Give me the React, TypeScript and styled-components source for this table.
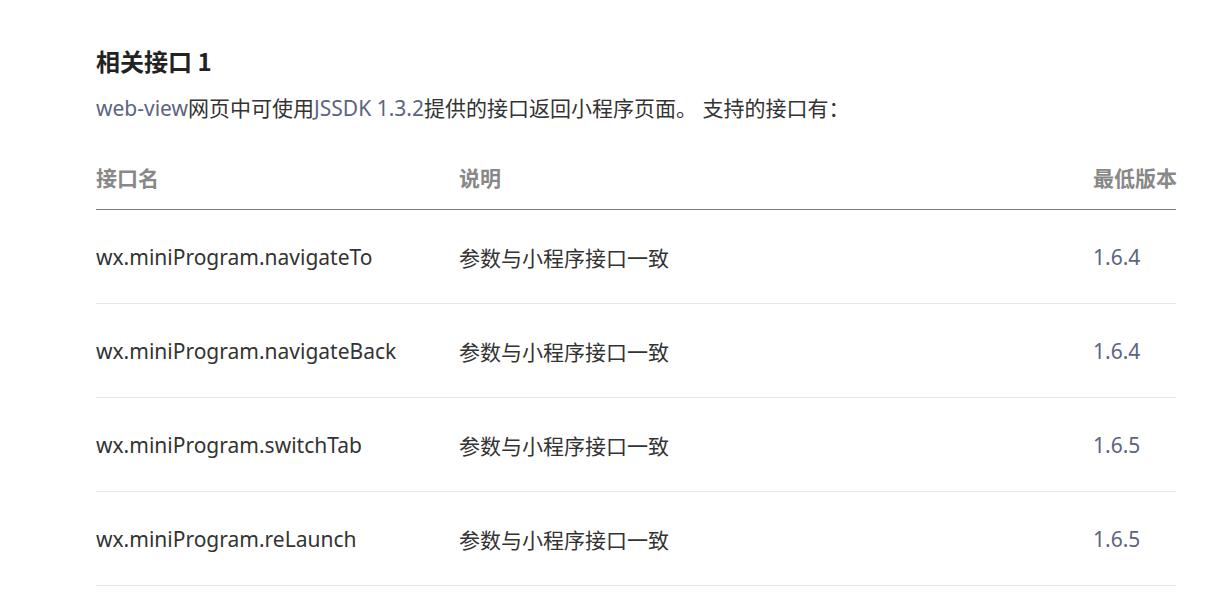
import React from "react";
import styled, { createGlobalStyle } from "styled-components";

const Global = createGlobalStyle`
  html, body { margin: 0; padding: 0; background: #fff; }
  body { font-family: "Noto Sans", "Noto Sans CJK SC", sans-serif; color: #333; }
`;

const Page = styled.div`
  padding: 45px 38px 0 96px;
  width: 1080px;
`;

const Title = styled.h2`
  margin: 0;
  font-size: 24px;
  line-height: 32px;
  font-weight: 700;
  color: #222;
  font-family: "Noto Sans CJK SC", sans-serif;
`;

const Para = styled.p`
  margin: 15px 0 0;
  font-size: 21px;
  line-height: 32px;
  color: #333;
  font-family: "Noto Sans", "Noto Sans CJK SC", sans-serif;
`;

const Link = styled.span`
  color: #5b6580;
`;

const Table = styled.table`
  margin-top: 22px;
  width: 1080px;
  border-collapse: collapse;
  table-layout: fixed;
`;

const Th = styled.th<{ $w: number }>`
  width: ${(p) => p.$w}px;
  text-align: left;
  font-weight: 700;
  font-size: 21px;
  color: #888;
  padding: 0 0 1px;
  height: 62px;
  border-bottom: 1px solid #7a7a7a;
  font-family: "Noto Sans CJK SC", sans-serif;
  white-space: nowrap;
`;

const Td = styled.td<{ $muted?: boolean }>`
  padding: 0;
  height: 93px;
  font-size: 21px;
  color: ${(p) => (p.$muted ? "#5b6580" : "#333")};
  border-bottom: 1px solid #e8e8e8;
  white-space: nowrap;
  font-family: "Noto Sans", "Noto Sans CJK SC", sans-serif;
`;

const rows = [
  ["wx.miniProgram.navigateTo", "1.6.4"],
  ["wx.miniProgram.navigateBack", "1.6.4"],
  ["wx.miniProgram.switchTab", "1.6.5"],
  ["wx.miniProgram.reLaunch", "1.6.5"],
];

export default function App() {
  return (
    <>
      <Global />
      <Page>
        <Title>相关接口 1</Title>
        <Para>
          <Link>web-view</Link>网页中可使用<Link>JSSDK 1.3.2</Link>提供的接口返回小程序页面。 支持的接口有：
        </Para>
        <Table>
          <thead>
            <tr>
              <Th $w={363}>接口名</Th>
              <Th $w={634}>说明</Th>
              <Th $w={83}>最低版本</Th>
            </tr>
          </thead>
          <tbody>
            {rows.map(([name, ver]) => (
              <tr key={name}>
                <Td>{name}</Td>
                <Td>参数与小程序接口一致</Td>
                <Td $muted>{ver}</Td>
              </tr>
            ))}
          </tbody>
        </Table>
      </Page>
    </>
  );
}
